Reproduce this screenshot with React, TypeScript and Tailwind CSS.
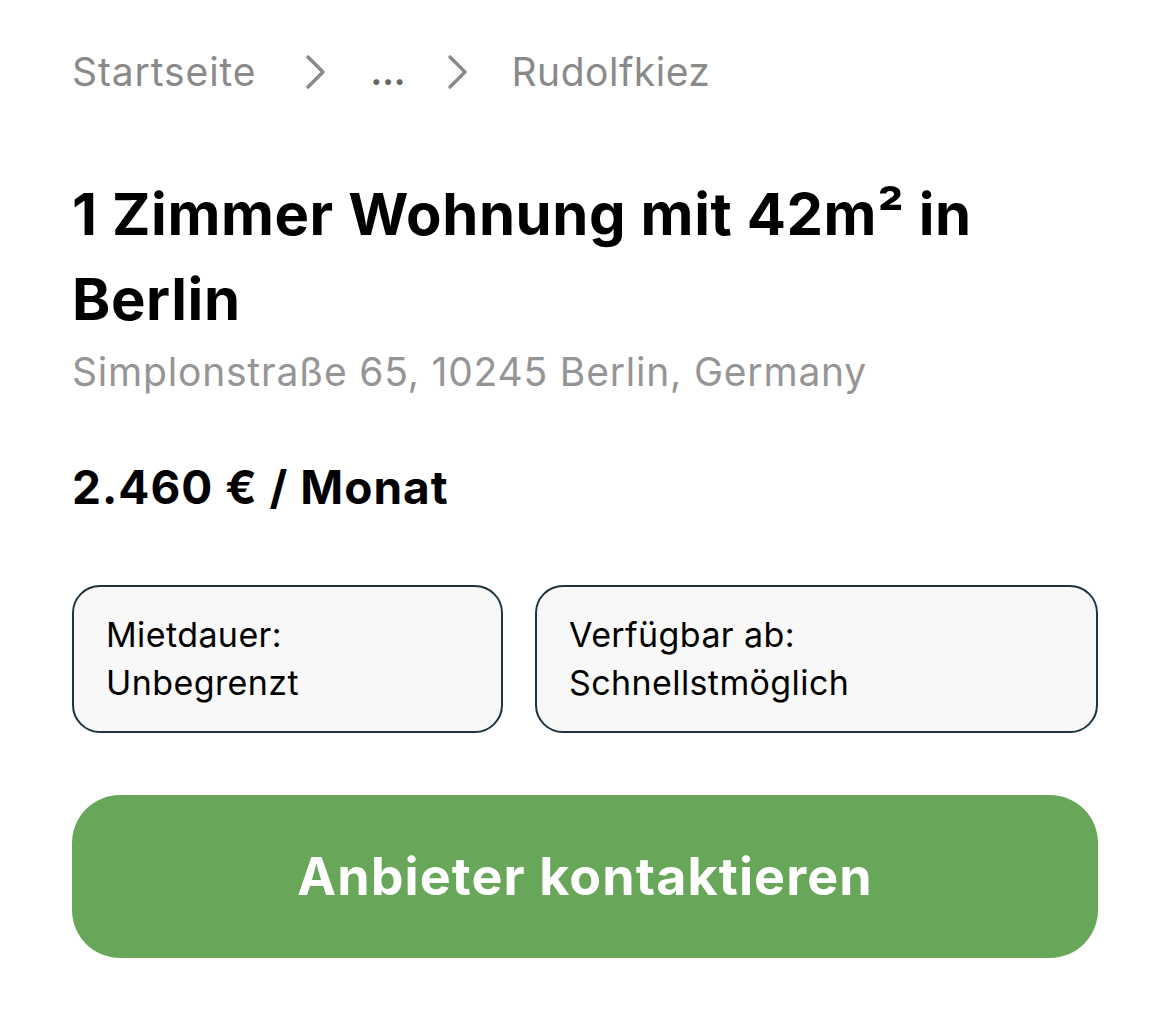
import React from 'react';

function Chevron() {
  return (
    <svg width="24" height="36" viewBox="0 0 24 36" fill="none" className="shrink-0">
      <polyline points="4,3 19,18 4,33" stroke="#8a8a8a" strokeWidth="3.5" strokeLinecap="round" strokeLinejoin="round" />
    </svg>
  );
}

function InfoBox({ label, value, className }: { label: string; value: string; className?: string }) {
  return (
    <div
      className={`h-[148px] rounded-[28px] border-2 border-[#1e3442] bg-[#f8f8f8] px-[32px] flex flex-col justify-center text-[34px] leading-[48px] tracking-[0.4px] text-black ${className ?? ''}`}
    >
      <span>{label}</span>
      <span>{value}</span>
    </div>
  );
}

export default function App() {
  return (
    <div className="min-h-[1026px] w-[1170px] bg-white px-[72px] pt-[48px] font-['Inter','Liberation_Sans',sans-serif]">
      <nav className="flex h-[48px] items-center text-[39px] tracking-[0.9px] text-[#8a8a8a]">
        <span>Startseite</span>
        <span className="ml-[48px]"><Chevron /></span>
        <span className="ml-[42px] text-[35px] font-bold tracking-normal text-[#666]">...</span>
        <span className="ml-[40px]"><Chevron /></span>
        <span className="ml-[42px] tracking-[0.5px]">Rudolfkiez</span>
      </nav>

      <h1 className="mt-[76px] w-[960px] text-[58px] font-bold leading-[85px] tracking-[0.6px] text-black">
        1 Zimmer Wohnung mit 42m² in Berlin
      </h1>
      <p className="mt-[6px] text-[39px] leading-[48px] tracking-[0.8px] text-[#959595]">Simplonstraße 65, 10245 Berlin, Germany</p>

      <p className="mt-[63px] text-[46px] font-bold leading-[56px] tracking-[1px] text-black">2.460 € / Monat</p>

      <div className="mt-[70px] flex gap-[32px]">
        <InfoBox label="Mietdauer:" value="Unbegrenzt" className="w-[431px]" />
        <InfoBox label="Verfügbar ab:" value="Schnellstmöglich" className="flex-1" />
      </div>

      <button className="mt-[62px] flex h-[163px] w-full items-center justify-center rounded-[48px] bg-[#68a659] text-[52px] font-bold tracking-[1.1px] text-white">
        Anbieter kontaktieren
      </button>
    </div>
  );
}
